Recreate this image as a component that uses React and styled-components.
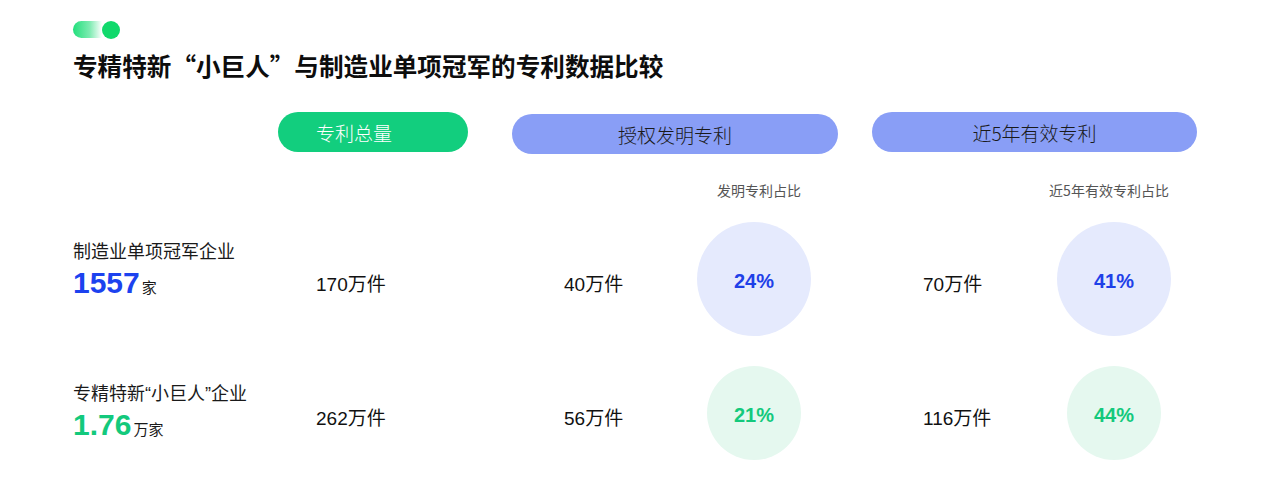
import React from 'react'
import styled, { createGlobalStyle } from 'styled-components'

const GlobalStyle = createGlobalStyle`
  body {
    margin: 0;
    background: #ffffff;
    font-family: "Noto Sans CJK SC", sans-serif;
    color: #111;
  }
`;

const Page = styled.div`
  width: 1269px;
  height: 481px;
  box-sizing: border-box;
  padding: 21px 0 0 73px;
  overflow: hidden;
`;

const Toggle = styled.div`
  position: relative;
  width: 47px;
  height: 17px;
  border-radius: 9px;
  background: linear-gradient(90deg, #22df7c 0%, #7cebb0 35%, #ffffff 62%, #ffffff 100%);
  margin-bottom: 11px;

  &::after {
    content: '';
    position: absolute;
    right: 0;
    top: -0.5px;
    width: 18px;
    height: 18px;
    border-radius: 50%;
    background: #10d96b;
  }
`;

const Title = styled.h1`
  margin: 0;
  font-family: "Noto Sans CJK SC", sans-serif;
  font-size: 24.6px;
  line-height: 32px;
  font-weight: 700;
  color: #0d0d0d;
`;

const Row = styled.div`
  display: grid;
  grid-template-columns: 205px 234px 360px 325px;
  align-items: ${p => p.$align || 'center'};
  height: ${p => p.$height}px;
  margin-top: ${p => p.$top || 0}px;
`;

const Pill = styled.div`
  height: 40px;
  border-radius: 20px;
  width: ${p => p.$width}px;
  background: ${p => (p.$green ? '#12ce7e' : '#899ef6')};
  color: ${p => (p.$green ? '#ffffff' : '#1a1a1a')};
  display: flex;
  align-items: center;
  justify-content: ${p => (p.$green ? 'flex-start' : 'center')};
  padding-left: ${p => (p.$green ? 38 : 0)}px;
  box-sizing: border-box;
  font-size: 19px;
  font-weight: 300;
  margin-top: ${p => p.$offset || 0}px;
`;

const Group = styled.div`
  display: flex;
  align-items: center;
`;

const Spacer = styled.div`
  width: 185px;
`;

const RatioCol = styled.div`
  width: 114px;
  display: flex;
  justify-content: center;
  align-items: center;
`;

const SubLabel = styled.div`
  font-size: 14px;
  line-height: 14px;
  color: #555;
  white-space: nowrap;
  padding-top: 29px;
  margin-left: ${p => p.$shift || 0}px;
`;

const Label = styled.div`
  display: flex;
  flex-direction: column;
  margin-bottom: ${p => p.$lift || 0}px;
`;

const LabelText = styled.div`
  font-family: "Liberation Sans", "Noto Sans CJK SC", sans-serif;
  font-size: 18px;
  line-height: 24px;
  color: #1a1a1a;
  white-space: nowrap;
`;

const BigLine = styled.div`
  margin-top: 3px;
  line-height: 32px;
  white-space: nowrap;
`;

const BigNum = styled.span`
  font-family: "Liberation Sans", sans-serif;
  font-weight: 700;
  font-size: 30px;
  color: ${p => (p.$green ? '#13c97c' : '#1c42ef')};
`;

const Unit = styled.span`
  font-size: 15px;
  margin-left: 2px;
  color: #1a1a1a;
`;

const Value = styled.div`
  width: ${p => p.$width}px;
  box-sizing: border-box;
  padding-left: ${p => p.$pad}px;
  padding-top: 6px;
  font-family: "Liberation Sans", "Noto Sans CJK SC", sans-serif;
  font-size: 19px;
  color: #111;
  white-space: nowrap;
`;

const Circle = styled.div`
  width: ${p => p.$size}px;
  height: ${p => p.$size}px;
  border-radius: 50%;
  flex-shrink: 0;
  background: ${p => (p.$green ? '#e5f8ef' : '#e5eafd')};
  color: ${p => (p.$green ? '#13c97c' : '#1e40e8')};
  display: flex;
  align-items: center;
  justify-content: center;
  font-family: "Liberation Sans", sans-serif;
  font-weight: 700;
  font-size: 20px;
  padding-top: 5px;
  box-sizing: border-box;
`;

const rows = [
  {
    label: '制造业单项冠军企业',
    num: '1557',
    unit: '家',
    green: false,
    lift: 16,
    total: '170万件',
    invention: '40万件',
    invRatio: '24%',
    valid: '70万件',
    validRatio: '41%',
    size: 114,
    top: 0,
  },
  {
    label: '专精特新“小巨人”企业',
    num: '1.76',
    unit: '万家',
    green: true,
    lift: 0,
    total: '262万件',
    invention: '56万件',
    invRatio: '21%',
    valid: '116万件',
    validRatio: '44%',
    size: 94,
    top: 30,
  },
]

const App = () => {
  return (
    <Page>
      <GlobalStyle />
      <Toggle />
      <Title>专精特新“小巨人”与制造业单项冠军的专利数据比较</Title>

      <Row $height={42} $top={31} $align="start">
        <div />
        <Pill $green $width={190}>专利总量</Pill>
        <Pill $width={326} $offset={2}>授权发明专利</Pill>
        <Pill $width={325}>近5年有效专利</Pill>
      </Row>

      <Row $height={68} $align="start">
        <div />
        <div />
        <Group>
          <Spacer />
          <RatioCol>
            <SubLabel $shift={10}>发明专利占比</SubLabel>
          </RatioCol>
        </Group>
        <Group>
          <Spacer />
          <RatioCol>
            <SubLabel $shift={-10}>近5年有效专利占比</SubLabel>
          </RatioCol>
        </Group>
      </Row>

      {rows.map(r => (
        <Row key={r.num} $height={r.size} $top={r.top}>
          <Label $lift={r.lift}>
            <LabelText>{r.label}</LabelText>
            <BigLine>
              <BigNum $green={r.green}>{r.num}</BigNum>
              <Unit>{r.unit}</Unit>
            </BigLine>
          </Label>
          <Value $width={234} $pad={38}>{r.total}</Value>
          <Group>
            <Value $width={185} $pad={52}>{r.invention}</Value>
            <RatioCol>
              <Circle $size={r.size} $green={r.green}>{r.invRatio}</Circle>
            </RatioCol>
          </Group>
          <Group>
            <Value $width={185} $pad={51}>{r.valid}</Value>
            <RatioCol>
              <Circle $size={r.size} $green={r.green}>{r.validRatio}</Circle>
            </RatioCol>
          </Group>
        </Row>
      ))}
    </Page>
  )
}

export default App
